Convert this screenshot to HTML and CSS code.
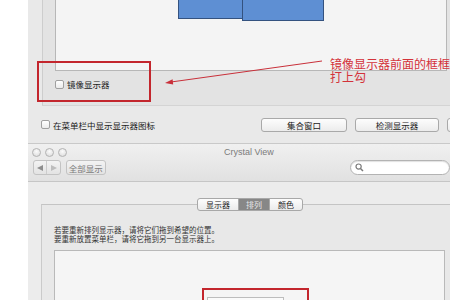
FILE: index.html
```html
<!DOCTYPE html>
<html lang="zh-CN">
<head>
<meta charset="utf-8">
<title>Crystal View</title>
<link rel="stylesheet" href="styles.css">
</head>
<body>
<div class="stage">
  <section class="win1">
    <div class="group1">
      <div class="panel1">
        <div class="disp d1"></div>
        <div class="disp d2"></div>
      </div>
      <label class="check mirror"><span class="box"></span><span>镜像显示器</span></label>
    </div>
    <div class="row1">
      <label class="check"><span class="box"></span><span>在菜单栏中显示显示器图标</span></label>
      <div class="btns">
        <span class="btn b1">集合窗口</span>
        <span class="btn b2">检测显示器</span>
        <span class="btn b3"></span>
      </div>
    </div>
  </section>

  <section class="win2">
    <header class="titlebar">
      <div class="titlerow">
        <div class="lights"><span class="light"></span><span class="light"></span><span class="light"></span></div>
        <span class="title">Crystal View</span>
      </div>
      <div class="toolbar">
        <div class="seg">
          <span class="segitem"><svg width="6" height="6" viewBox="0 0 6 6"><polygon points="0,3 6,0 6,6" fill="#8e8e8e"/></svg></span>
          <span class="segitem"><svg width="6" height="6" viewBox="0 0 6 6"><polygon points="6,3 0,0 0,6" fill="#bdbdbd"/></svg></span>
        </div>
        <span class="allbtn">全部显示</span>
        <div class="search">
          <svg width="9" height="9" viewBox="0 0 9 9"><circle cx="3.6" cy="3.6" r="2.6" fill="none" stroke="#7a7a7a" stroke-width="1.2"/><line x1="5.5" y1="5.5" x2="8" y2="8" stroke="#7a7a7a" stroke-width="1.5"/></svg>
        </div>
      </div>
    </header>
    <div class="content">
      <div class="tabs">
        <span class="tab t1">显示器</span>
        <span class="tab t2 on">排列</span>
        <span class="tab t3">颜色</span>
      </div>
      <div class="group2">
        <p class="desc">若要重新排列显示器，请将它们拖到希望的位置。</p>
        <p class="desc">要重新放置菜单栏，请将它拖到另一台显示器上。</p>
        <div class="panel2"><div class="menu-disp"></div></div>
      </div>
    </div>
  </section>

  <div class="note-rect r1"></div>
  <div class="note-rect r2"></div>
  <svg class="arrow" width="450" height="300" viewBox="0 0 450 300">
    <line x1="322" y1="61" x2="171" y2="82" stroke="#c9303a" stroke-width="1"/>
    <polygon points="165,83 173.2,84.6 172.6,79.2" fill="#c9303a"/>
  </svg>
  <div class="note-text">
    <div class="note-line">镜像显示器前面的框框</div>
    <div class="note-line">打上勾</div>
  </div>
</div>
</body>
</html>
```

FILE: styles.css
```css
html, body {
  margin: 0;
  background: #ffffff;
  font-family: "Noto Sans CJK SC", "Noto Sans", sans-serif;
}

.stage {
  position: relative;
  width: 450px;
  height: 300px;
  overflow: hidden;
}

/* ---------- top window ---------- */
.win1 {
  margin-left: 28px;
  height: 144px;
  box-sizing: border-box;
  background: #e9e9e9;
  border-bottom: 1px solid #c9c9c9;
  display: flex;
  flex-direction: column;
  overflow: hidden;
}

.group1 {
  margin-left: 14px;
  height: 106px;
  flex: none;
  box-sizing: border-box;
  background: #e3e3e3;
  border-left: 1px solid #cdcdcd;
  border-bottom: 1px solid #d4d4d4;
  padding-left: 12px;
}

.panel1 {
  position: relative;
  width: 392px;
  height: 71px;
  box-sizing: border-box;
  background: #f4f4f4;
  border: 1px solid #b7b7b7;
  border-top: 0;
}

.disp {
  position: absolute;
  top: -1px;
  box-sizing: border-box;
  background: #5e8fd3;
  border: 1px solid #34527f;
}
.d1 { left: 122px; width: 65px; height: 20px; }
.d2 { left: 186px; width: 82px; height: 22px; }

.check {
  display: flex;
  align-items: center;
  gap: 3px;
  font-size: 8.5px;
  line-height: 10px;
  color: #1a1a1a;
  white-space: nowrap;
}

.box {
  width: 9px;
  height: 9px;
  flex: none;
  box-sizing: border-box;
  border: 1px solid #a0a0a0;
  border-radius: 2px;
  background: linear-gradient(#ffffff, #ebebeb);
}

.mirror { margin-top: 8px; }

.row1 {
  flex: 1;
  display: grid;
  grid-template-columns: 220px auto;
  align-items: center;
  padding-left: 13px;
}

.btns {
  display: flex;
  gap: 8px;
}

.btn {
  flex: none;
  height: 14px;
  box-sizing: border-box;
  border: 1px solid #a9a9a9;
  border-radius: 3px;
  background: linear-gradient(#fdfdfd, #ececec);
  font-size: 8.5px;
  color: #1a1a1a;
  display: flex;
  align-items: center;
  justify-content: center;
}
.b1 { width: 86px; }
.b2 { width: 84px; }
.b3 { width: 40px; }

/* ---------- bottom window ---------- */
.win2 {
  margin-left: 28px;
  height: 156px;
  background: #ececec;
  overflow: hidden;
}

.titlebar {
  height: 38px;
  box-sizing: border-box;
  background: linear-gradient(#f0f0f0, #e1e1e1);
  border-bottom: 1px solid #c6c6c6;
}

.titlerow {
  display: flex;
  align-items: center;
  height: 16px;
  padding-left: 4px;
}

.lights {
  display: flex;
  gap: 4px;
}

.light {
  width: 9px;
  height: 9px;
  box-sizing: border-box;
  border-radius: 50%;
  border: 1px solid #b3b3b3;
  background: radial-gradient(circle at 50% 35%, #fbfbfb, #d9d9d9);
}

.title {
  margin-left: 157px;
  font-family: "Liberation Sans", Arial, sans-serif;
  font-size: 9px;
  color: #7b7b7b;
}

.toolbar {
  display: flex;
  align-items: center;
  height: 15px;
  padding-left: 5px;
}

.seg {
  display: flex;
  width: 35px;
  height: 15px;
  box-sizing: border-box;
  border: 1px solid #c3c3c3;
  border-radius: 3px;
  background: linear-gradient(#f3f3f3, #e3e3e3);
}

.segitem {
  flex: 1;
  display: flex;
  align-items: center;
  justify-content: center;
}
.segitem + .segitem { border-left: 1px solid #cdcdcd; }

.allbtn {
  margin-left: 5px;
  width: 51px;
  height: 15px;
  box-sizing: border-box;
  border: 1px solid #c3c3c3;
  border-radius: 3px;
  background: linear-gradient(#f3f3f3, #e3e3e3);
  font-size: 8.5px;
  color: #7a7a7a;
  display: flex;
  align-items: center;
  justify-content: center;
}

.search {
  margin-left: 244px;
  width: 100px;
  height: 15px;
  flex: none;
  box-sizing: border-box;
  border: 1px solid #b3b3b3;
  border-radius: 8px;
  background: #ffffff;
  box-shadow: inset 0 1px 1px rgba(0,0,0,0.12);
  display: flex;
  align-items: center;
  padding-left: 4px;
}

.content {
  height: 118px;
}

.tabs {
  position: relative;
  z-index: 1;
  display: flex;
  width: max-content;
  height: 13px;
  margin: 16px 0 0 169px;
  box-sizing: border-box;
  border: 1px solid #a8a8a8;
  border-radius: 3px;
  overflow: hidden;
  background: linear-gradient(#fdfdfd, #ebebeb);
}

.tab {
  display: flex;
  align-items: center;
  justify-content: center;
  font-size: 8px;
  color: #222;
  box-sizing: border-box;
}
.tab + .tab { border-left: 1px solid #a8a8a8; }
.t1 { width: 40px; }
.t2 { width: 31px; }
.t3 { width: 33px; }
.tab.on {
  background: #878787;
  color: #e6e6e6;
}

.group2 {
  margin: -7px 0 0 13px;
  height: 110px;
  box-sizing: border-box;
  background: #e8e8e8;
  border-top: 1px solid #c4c4c4;
  border-left: 1px solid #cacaca;
  padding: 20px 0 0 12px;
}

.desc {
  margin: 0;
  height: 9px;
  font-size: 7.5px;
  line-height: 9px;
  color: #333;
  white-space: nowrap;
}

.panel2 {
  position: relative;
  margin-top: 7px;
  width: 391px;
  height: 60px;
  box-sizing: border-box;
  background: #f5f5f5;
  border: 1px solid #b9b9b9;
}

.menu-disp {
  position: absolute;
  left: 152px;
  top: 46px;
  width: 75px;
  height: 20px;
  background: #fbfbfb;
  border: 1px solid #bdbdbd;
}

/* ---------- annotations ---------- */
.note-rect {
  position: absolute;
  box-sizing: border-box;
  border: 2px solid #c3262d;
}
.r1 { left: 37px; top: 61px; width: 114px; height: 41px; }
.r2 { left: 202px; top: 288px; width: 107px; height: 30px; }

.arrow {
  position: absolute;
  left: 0;
  top: 0;
  pointer-events: none;
}

.note-text {
  position: absolute;
  left: 330px;
  top: 58px;
  color: #d3323a;
  white-space: nowrap;
}

.note-line {
  height: 12.5px;
  font-size: 12px;
  line-height: 12.5px;
}
```
